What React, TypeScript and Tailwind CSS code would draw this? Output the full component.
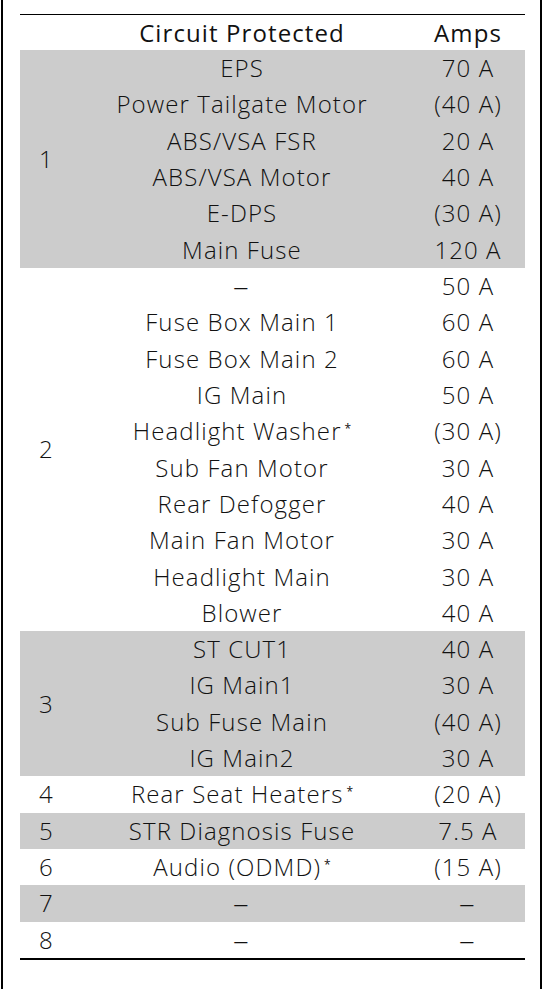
import React from "react";

type Row = { name: string; star?: boolean; amps: string };
type Group = { num: string; gray: boolean; rows: Row[] };

const groups: Group[] = [
  {
    num: "1",
    gray: true,
    rows: [
      { name: "EPS", amps: "70 A" },
      { name: "Power Tailgate Motor", amps: "(40 A)" },
      { name: "ABS/VSA FSR", amps: "20 A" },
      { name: "ABS/VSA Motor", amps: "40 A" },
      { name: "E-DPS", amps: "(30 A)" },
      { name: "Main Fuse", amps: "120 A" },
    ],
  },
  {
    num: "2",
    gray: false,
    rows: [
      { name: "–", amps: "50 A" },
      { name: "Fuse Box Main 1", amps: "60 A" },
      { name: "Fuse Box Main 2", amps: "60 A" },
      { name: "IG Main", amps: "50 A" },
      { name: "Headlight Washer", star: true, amps: "(30 A)" },
      { name: "Sub Fan Motor", amps: "30 A" },
      { name: "Rear Defogger", amps: "40 A" },
      { name: "Main Fan Motor", amps: "30 A" },
      { name: "Headlight Main", amps: "30 A" },
      { name: "Blower", amps: "40 A" },
    ],
  },
  {
    num: "3",
    gray: true,
    rows: [
      { name: "ST CUT1", amps: "40 A" },
      { name: "IG Main1", amps: "30 A" },
      { name: "Sub Fuse Main", amps: "(40 A)" },
      { name: "IG Main2", amps: "30 A" },
    ],
  },
  { num: "4", gray: false, rows: [{ name: "Rear Seat Heaters", star: true, amps: "(20 A)" }] },
  { num: "5", gray: true, rows: [{ name: "STR Diagnosis Fuse", amps: "7.5 A" }] },
  { num: "6", gray: false, rows: [{ name: "Audio (ODMD)", star: true, amps: "(15 A)" }] },
  { num: "7", gray: true, rows: [{ name: "–", amps: "–" }] },
  { num: "8", gray: false, rows: [{ name: "–", amps: "–" }] },
];

function Cell({ text }: { text: string }) {
  if (text === "–") {
    return <span className="inline-block scale-x-[1.3]">–</span>;
  }
  return <>{text}</>;
}

export default function App() {
  return (
    <div
      className="w-[545px] h-[989px] bg-white pl-[1px] text-[#111111]"
      style={{ fontFamily: '"Open Sans", "Noto Sans", sans-serif' }}
    >
      <div className="w-[541px] h-[989px] border-x-2 border-black pt-[14px] pl-[17px]">
        <div className="w-[505px] text-[24px] tracking-[1.1px] leading-none">
          <div className="flex h-[36px] border-t-[1.5px] border-black items-center">
            <div className="w-[53px]" />
            <div className="w-[338px] text-center">Circuit Protected</div>
            <div className="w-[114px] text-center">Amps</div>
          </div>
          {groups.map((g) => (
            <div key={g.num} className={`flex font-light ${g.gray ? "bg-[#cccccc]" : "bg-white"}`}>
              <div className="w-[53px] pl-[19px] flex items-center">{g.num}</div>
              <div className="flex flex-col">
                {g.rows.map((r, i) => (
                  <div key={i} className="flex h-[36.32px] items-center">
                    <div className="w-[338px] text-center">
                      <Cell text={r.name} />
                      {r.star && (
                        <sup className="text-[12px] ml-[3px] relative -top-[7px] tracking-normal font-normal">*</sup>
                      )}
                    </div>
                    <div className="w-[114px] text-center">
                      <Cell text={r.amps} />
                    </div>
                  </div>
                ))}
              </div>
            </div>
          ))}
          <div className="border-t-2 border-black" />
        </div>
      </div>
    </div>
  );
}
